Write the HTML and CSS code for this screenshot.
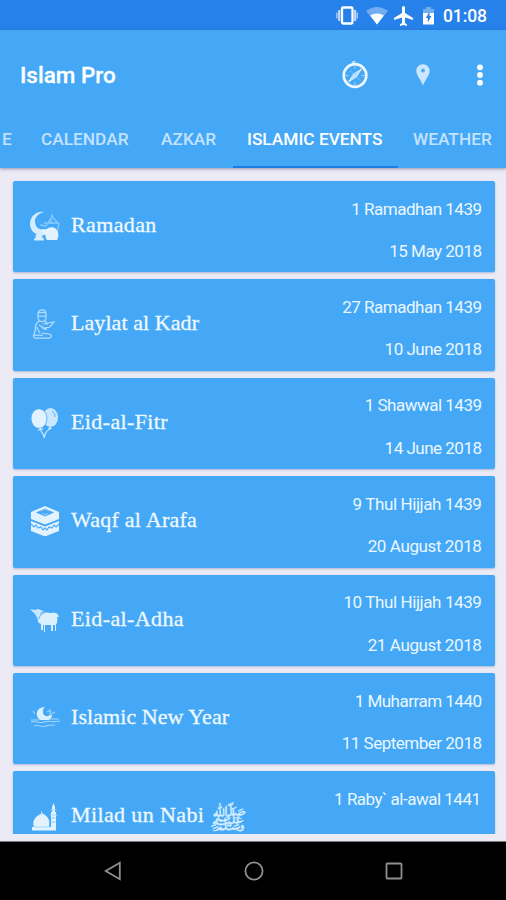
FILE: index.html
```html
<!DOCTYPE html>
<html lang="en">
<head>
<meta charset="utf-8">
<title>Islam Pro</title>
<link rel="stylesheet" href="styles.css">
</head>
<body>
<div class="status">
  <svg width="22" height="20" viewBox="0 0 22 20" fill="none" stroke="#fff"><rect x="6" y="1.5" width="10.5" height="16" rx="1.2" stroke-width="2.3"/><path d="M3.2 4v11M19.2 4v11" stroke-width="2" opacity=".75"/><path d="M.9 6.5v6M21.3 6.5v6" stroke-width="1.4" opacity=".6"/></svg>
  <svg class="wifi" width="22" height="18" viewBox="0 0 22 18" fill="#fff"><path d="M0 4Q11-4 22 4L11 17.500Z" opacity=".35"/><path d="M4.200 8.500Q11 4.500 17.800 8.500L11 17.500Z"/></svg>
  <svg class="plane" width="20" height="20" viewBox="2 2 20 20" fill="#fff"><path d="M21 16v-2l-8-5V3.500a1.500 1.500 0 0 0-3 0V9l-8 5v2l8-2.500V19l-2 1.500V22l3.500-1 3.500 1v-1.500L13 19v-5.500z"/></svg>
  <svg class="battery" width="13" height="20" viewBox="0 0 13 20"><path d="M4 1h5v2h3v5H1V3h3z" fill="#fff" opacity=".35"/><path d="M1 7h11v11.500H1z" fill="#fff"/><path d="M7.500 5.500L3.800 12h2v4.500L9.400 10H7.500z" fill="#2781ea"/></svg>
  <span class="clock">01:08</span>
</div>
<header class="appbar">
  <div class="toolbar">
    <h1>Islam Pro</h1>
    <svg class="compass" width="28" height="28" viewBox="0 0 28 28" fill="none" stroke="#fff"><circle cx="14" cy="14.500" r="11.300" stroke-width="2.700" opacity=".9"/><path d="M12 2.500V.8h2.500" stroke-width="1.500" opacity=".6"/><path d="M14 5v3M14 21v3M4.500 14.500h3M20.500 14.500h3" opacity=".5"/><path d="M20.500 8L15.500 16 7.500 21l5-8z" fill="#fff" fill-opacity=".45" stroke-opacity=".6"/><path d="M7.500 21l13-13" stroke="#e9f6ff"/><path d="M9 9.500l10 10" stroke-opacity=".3"/></svg>
    <svg class="pin" width="14" height="22" viewBox="0 0 14 22"><path d="M7 .3C3.200.3.300 3.300.300 6.800.300 11.500 5 16 7 21.500c2-5.500 6.700-10 6.700-14.700C13.700 3.300 10.800.3 7 .3z" fill="#cbe7ff"/><circle cx="7" cy="6.500" r="2" fill="#55aef5"/></svg>
    <svg class="more" width="8" height="22" viewBox="0 0 8 22" fill="#fff"><circle cx="4" cy="3.300" r="2.900"/><circle cx="4" cy="11" r="2.900"/><circle cx="4" cy="18.700" r="2.900"/></svg>
  </div>
  <nav class="tabs">
    <span class="tab tab-prev">E</span><span class="tab tab-calendar">CALENDAR</span><span class="tab tab-azkar">AZKAR</span><span class="tab active">ISLAMIC EVENTS</span><span class="tab tab-weather">WEATHER</span>
  </nav>
</header>
<main class="list">
  <article class="card">
    <svg class="icon" viewBox="0 0 30 30"><path d="M14 1C7 0 0 5 0 13c0 5 3 9 7 10-2 1-2 2-1 3l-2 2v1.500h10V28l-2-2 1-2h2l2-6C10 20 5 17 5 10c0-4 4-8 9-9z" fill="#d3ecff"/><path d="M10 14l6 1 5-8 1-3 1 3 6 6-2 8M14 12h15M21 7v6" fill="none" stroke="#8ac9fc" stroke-width="1.300"/><path d="M14 18l2 1c1-3 8-4 10-1 3 3 3 8 1 11H17c-2-2-1-4-2-6s-4-2-5-4z" fill="#e2f3ff"/></svg>
    <h2 class="s1">Ramadan</h2><div class="dates"><span>1 Ramadhan 1439</span><span>15 May 2018</span></div>
  </article>
  <article class="card">
    <svg class="icon" viewBox="0 0 30 30" fill="none" stroke="#b4dcff" stroke-width="1.250"><path d="M8 5c0-5 8-6 8 0v3c0 6-8 6-8 0zM8 4c3-1 5-1 8 0M8 7h8M9 12l-3 3c-1 4 0 7-2 10-1 3 0 4 1 4h15c2-1 2-4-1-4l-7-1M15 12c2 1 2 3 2 4M13 15l11-2-4 5-6 1-5-3M12 18l2 2h3M7 18c0 3 2 4 3 6M4 26h9"/></svg>
    <h2 class="s0">Laylat al Kadr</h2><div class="dates"><span>27 Ramadhan 1439</span><span>10 June 2018</span></div>
  </article>
  <article class="card">
    <svg class="icon" viewBox="0 0 30 30"><ellipse cx="20.500" cy="9.500" rx="7.500" ry="9.500" fill="#c9e7ff"/><path d="M20 18l-2 3h4z" fill="#c9e7ff"/><ellipse cx="9" cy="10.500" rx="8" ry="9.800" fill="#e2f3ff" stroke="#44a8f7" stroke-width=".8"/><path d="M8 22l4-1-2-1c0 4 5 6 4 10 2-4 0-6 6-9" fill="none" stroke="#c9e7ff" stroke-width="1.200"/><path d="M22 3c2 1 3 3 3 6" fill="none" stroke="#54affa"/></svg>
    <h2 class="s1">Eid-al-Fitr</h2><div class="dates"><span>1 Shawwal 1439</span><span>14 June 2018</span></div>
  </article>
  <article class="card">
    <svg class="icon" viewBox="0 0 30 30"><path d="M15 0l14 6v7l-14 5.500L1 13V6z" fill="#e2f3ff"/><path d="M15 2.500L24 6.500 15 10.500 6 6.500z" fill="#44a8f7"/><path d="M10 5l5-2 5 2M12 7.500l3 1.500 3-1.500" fill="none" stroke="#9bd1fd"/><path d="M1 15l14 5.500L29 15v10l-14 5.500L1 25z" fill="#e2f3ff"/><path d="M1 18l3 3 2-2 2 3 3-1 2 3 2-2 2 2 2-3 3 1 2-3 2 2 3-3" fill="none" stroke="#44a8f7" stroke-width="1.100"/></svg>
    <h2 class="s2">Waqf al Arafa</h2><div class="dates thul"><span>9 Thul Hijjah 1439</span><span>20 August 2018</span></div>
  </article>
  <article class="card">
    <svg class="icon" viewBox="0 0 30 30"><path d="M0 4l5 1 3-1 3 1 3 1-2 3-1 4-3 1-3-5z" fill="#c9e7ff"/><path d="M14 8c3-1 5 0 7 0 4-1 7 0 8 4l-2 0c1 3 0 6-1 8v6h-1v-6h-2v6h-2v-6h-6v7h-1v-7h-1v5h-2v-6c-3-1-4-4-3-7 2-1 4-2 6-4z" fill="#dbf0ff"/><path d="M12.500 6l-4 8" stroke="#54affa" fill="none"/></svg>
    <h2 class="s1">Eid-al-Adha</h2><div class="dates thul"><span>10 Thul Hijjah 1439</span><span>21 August 2018</span></div>
  </article>
  <article class="card">
    <svg class="icon" viewBox="0 -2 30 30"><path d="M15 2c-6 0-9 4-8 9 1 2 2 4 4 4h8c2-1 3-3 3-6-3 3-8 3-9-1 0-3 0-5 2-6z" fill="#dbf0ff"/><path d="M17 7l2-1 1-1 1 2-2 3M3 6l2 3M22 9l3-2M1 15h8M19 14h10M1 17c5-2 7 2 13 0s8 1 16-1M4 21c5-2 8 2 12 0s7 0 9-1" fill="none" stroke="#9ed3fd" stroke-width="1.200"/></svg>
    <h2 class="s0">Islamic New Year</h2><div class="dates"><span>1 Muharram 1440</span><span>11 September 2018</span></div>
  </article>
  <article class="card">
    <svg class="icon" viewBox="0 -1 30 30"><path d="M2 28.500V25h2c-2-7 1-10 8-14 7 4 8 7 7 14h2V10h1V5l1.500-4L25 5v5h1v18.500z" fill="#e2f3ff"/><path d="M11.500 9v4M20 13h7M20.500 8h6M4 25h16" stroke="#a6d7ff"/><path d="M21.500 16h4M21.500 20h4" stroke="#82c6fc"/></svg>
    <h2 class="s1">Milad un Nabi <span class="salawat">ﷺ</span></h2><div class="dates"><span class="last-date">1 Raby` al-awal 1441</span></div>
  </article>
</main>
<footer class="nav">
  <svg width="18" height="20" viewBox="0 0 18 20"><path d="M1.700 10L15.800 1.700v16.600z"/></svg>
  <svg width="20" height="20" viewBox="0 0 20 20"><circle cx="10" cy="10" r="8.600"/></svg>
  <svg width="18" height="18" viewBox="0 0 18 18"><rect x="1.500" y="1.500" width="15" height="15" rx=".7"/></svg>
</footer>
</body>
</html>
```
FILE: styles.css
```css
* { box-sizing: border-box; }
body {
  margin: 0;
  width: 506px;
  height: 900px;
  overflow: hidden;
  display: flex;
  flex-direction: column;
  font-family: Roboto, "Liberation Sans", sans-serif;
  color: #fff;
  background: #ebeaf5;
}
h1, h2 { margin: 0; font-weight: 500; }
svg { display: block; flex: none; }
.status {
  height: 30px;
  flex: none;
  background: #2781ea;
  display: flex;
  align-items: center;
  padding: 1px 0 0 336px;
}
.wifi { margin-left: 8px; }
.plane { margin-left: 6px; }
.battery { margin-left: 8px; }
.clock { margin-left: 8px; font-size: 17.5px; font-weight: 500; letter-spacing: -.1px; }
.appbar {
  height: 138px;
  flex: none;
  background: #44a8f7;
  box-shadow: 0 1px 3px rgba(60, 65, 90, .5);
  position: relative;
}
.toolbar { height: 90px; display: flex; align-items: center; padding-left: 20px; }
h1 { width: 321px; font-size: 22.5px; line-height: 28px; -webkit-text-stroke: .3px #fff; }
.pin { margin-left: 47px; }
.more { margin-left: 46px; }
.tabs { height: 48px; display: flex; white-space: nowrap; }
.tab {
  flex: none;
  font-size: 17.3px;
  font-weight: 500;
  line-height: 38px;
  color: #c2e3ff;
}
.tab-prev { width: 41px; padding-left: 2px; }
.tab-calendar { width: 120px; }
.tab-azkar { width: 72px; }
.tab.active { width: 165px; padding-left: 14px; color: #fff; border-bottom: 2px solid #1b7ee4; }
.tab-weather { padding-left: 15px; }
.list {
  height: 666px;
  flex: none;
  overflow: hidden;
  padding: 13px 11.5px 0 12.5px;
  display: flex;
  flex-direction: column;
  gap: 7px;
}
.card {
  height: 91.4px;
  flex: none;
  display: flex;
  background: #44a8f7;
  border-radius: 2px;
  padding: 0 13px 0 17.5px;
  box-shadow: 0 1px 2px rgba(80, 110, 170, .4);
}
.icon { width: 30px; height: 30px; margin-top: 30px; }
h2 {
  margin-left: 11px;
  font-family: "Liberation Serif", serif;
  font-size: 22px;
  font-weight: 400;
  line-height: 30px;
  padding-top: 29px;
  color: #f0f9ff;
  -webkit-text-stroke: .3px #f0f9ff;
  white-space: nowrap;
}
.s2 { letter-spacing: .25px; }
.s1 { letter-spacing: .38px; }
.s0 { letter-spacing: .07px; }
.salawat {
  display: inline-block;
  font-size: 30px;
  line-height: 20px;
  font-family: "DejaVu Sans", "Noto Sans", sans-serif;
  -webkit-text-stroke: .5px #d4ecff;
  color: #d4ecff;
  transform: translateY(8px) scale(1.06, .85);
}
.dates {
  margin-left: auto;
  display: flex;
  flex-direction: column;
  align-items: flex-end;
  gap: 18.3px;
  padding-top: 15.7px;
  font-size: 17px;
  line-height: 24px;
  letter-spacing: -.5px;
  color: #ebf7ff;
  white-space: nowrap;
}
.thul { letter-spacing: -.4px; }
.last-date { padding-right: 1px; }
.nav {
  height: 59px;
  margin-top: auto;
  background: #000;
  border-top: 1px solid #77767a;
  display: flex;
  align-items: center;
  justify-content: space-between;
  padding: 0 103px 0 104px;
}
.nav svg { fill: none; stroke: #8f8f8f; stroke-width: 1.8; }
```
